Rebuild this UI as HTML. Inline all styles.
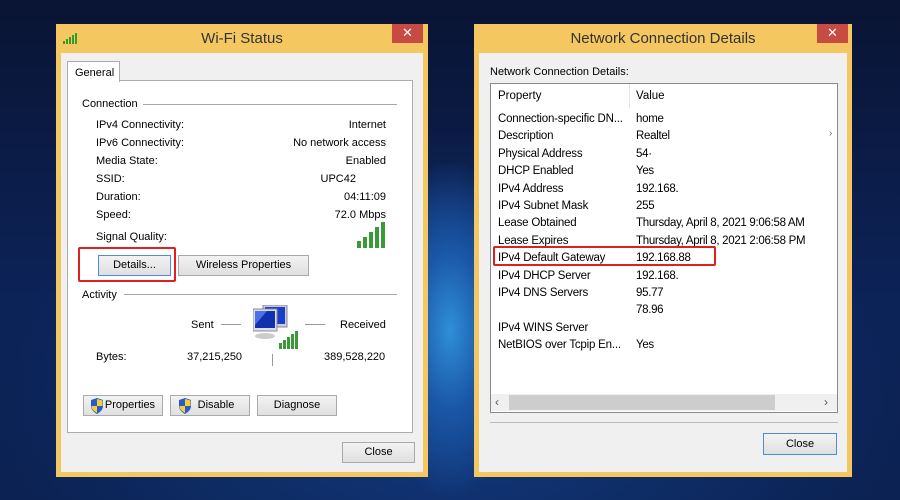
<!DOCTYPE html>
<html><head><meta charset="utf-8"><style>
*{margin:0;padding:0;box-sizing:border-box}
body{width:900px;height:500px;overflow:hidden;position:relative;font-family:"Liberation Sans",sans-serif;font-size:11px;color:#000;
background:radial-gradient(ellipse 90px 200px at 450px 330px,#2f8fd8 0%,#1a56a6 40%,transparent 85%),radial-gradient(ellipse 500px 300px at 450px 400px,#12397e 0%,transparent 90%),linear-gradient(180deg,#0a1434 0%,#0c2358 60%,#0b2252 100%);}
.a{position:absolute}
.win{position:absolute;background:#f4c760;}
.client{position:absolute;background:#f0f0f0}
.title{position:absolute;font-size:15px;color:#333;top:6px;width:100%;text-align:center}
.x{position:absolute;top:0;width:31px;height:19px;background:#c74a43;color:#fff;font-size:13px;text-align:center;line-height:18px}
.btn{position:absolute;background:linear-gradient(#f3f3f3,#e0e0e0);border:1px solid #aaa;text-align:center;font-size:11px;line-height:18px}
.r{position:absolute;right:0}
.line{position:absolute;height:1px;background:#a8a8a8}
</style></head><body>

<div class="win" style="left:56px;top:24px;width:372px;height:453px">
 <div class="title">Wi-Fi Status</div>
 <svg class="a" style="left:7px;top:9px" width="16" height="11"><g fill="#3a9a2a"><rect x="0" y="8" width="2" height="3"/><rect x="3" y="6" width="2" height="5"/><rect x="6" y="4" width="2" height="7"/><rect x="9" y="2" width="2" height="9"/><rect x="12" y="0" width="2" height="11"/></g></svg>
 <div class="x" style="left:336px">✕</div>
 <div class="client" style="left:5px;top:29px;width:362px;height:419px"></div>
</div>
<div class="a" style="left:67px;top:80px;width:346px;height:353px;background:#fff;border:1px solid #adadad"></div>
<div class="a" style="left:67px;top:61px;width:53px;height:21px;background:#fff;border:1px solid #adadad;border-bottom:none;padding:5px 0 0 7px;font-size:11px">General</div>

<div class="a" style="left:82px;top:98px">Connection</div><div class="line" style="left:143px;top:104px;width:254px"></div>
<div class="a" style="left:96px;top:116px;width:290px;line-height:18px">
 <div style="position:relative">IPv4 Connectivity:<span class="r">Internet</span></div>
 <div style="position:relative">IPv6 Connectivity:<span class="r">No network access</span></div>
 <div style="position:relative">Media State:<span class="r">Enabled</span></div>
 <div style="position:relative">SSID:<span class="r" style="right:30px">UPC42</span></div>
 <div style="position:relative">Duration:<span class="r">04:11:09</span></div>
 <div style="position:relative">Speed:<span class="r">72.0 Mbps</span></div>
</div>
<div class="a" style="left:96px;top:231px">Signal Quality:</div>
<svg class="a" style="left:357px;top:222px" width="30" height="26"><g fill="#3a9a3a"><rect x="0" y="19" width="4" height="7"/><rect x="6" y="15" width="4" height="11"/><rect x="12" y="10" width="4" height="16"/><rect x="18" y="5" width="4" height="21"/><rect x="24" y="0" width="4" height="26"/></g></svg>
<div class="btn" style="left:98px;top:255px;width:73px;height:21px;border-color:#4a90d0">Details...</div>
<div class="btn" style="left:178px;top:255px;width:131px;height:21px">Wireless Properties</div>
<div class="a" style="left:78px;top:247px;width:98px;height:35px;border:2px solid #e02020;border-radius:2px"></div>

<div class="a" style="left:82px;top:289px">Activity</div><div class="line" style="left:124px;top:294px;width:273px"></div>
<div class="a" style="left:191px;top:319px">Sent</div><div class="line" style="left:221px;top:324px;width:20px;background:#999"></div>
<div class="line" style="left:305px;top:324px;width:20px;background:#999"></div>
<div class="a" style="left:340px;top:319px">Received</div>
<svg class="a" style="left:253px;top:305px" width="48" height="44">
 <rect x="10" y="0" width="24" height="22" fill="#ccd" stroke="#889"/><rect x="12" y="2" width="20" height="17" fill="#1a40c8"/>
 <rect x="0" y="4" width="24" height="22" fill="#dde" stroke="#889"/><rect x="2" y="6" width="20" height="17" fill="#1030b0"/>
 <polygon points="2,6 14,6 2,20" fill="#4a70e8"/><ellipse cx="12" cy="31" rx="10" ry="3" fill="#ccc"/>
 <g fill="#3a9a3a"><rect x="26" y="38" width="3" height="6"/><rect x="30" y="35" width="3" height="9"/><rect x="34" y="32" width="3" height="12"/><rect x="38" y="29" width="3" height="15"/><rect x="42" y="26" width="3" height="18"/></g>
</svg>
<div class="a" style="left:96px;top:351px">Bytes:</div>
<div class="a" style="left:187px;top:351px">37,215,250</div>
<div class="a" style="left:272px;top:354px;width:1px;height:12px;background:#999"></div>
<div class="a" style="left:324px;top:351px">389,528,220</div>
<div class="btn" style="left:83px;top:395px;width:80px;height:21px;padding-left:14px">Properties</div>
<div class="btn" style="left:170px;top:395px;width:80px;height:21px;padding-left:12px">Disable</div>
<div class="btn" style="left:257px;top:395px;width:80px;height:21px">Diagnose</div>
<svg class="a" style="left:90px;top:398px" width="14" height="16"><path d="M7 0L13 2V8C13 12 10 14 7 16C4 14 1 12 1 8V2Z" fill="#2a5ad0"/><path d="M7 1V8H12.5V2.5Z M7 8V15C4 13 1.5 11.5 1.5 8Z" fill="#f4d030"/></svg>
<svg class="a" style="left:178px;top:398px" width="14" height="16"><path d="M7 0L13 2V8C13 12 10 14 7 16C4 14 1 12 1 8V2Z" fill="#2a5ad0"/><path d="M7 1V8H12.5V2.5Z M7 8V15C4 13 1.5 11.5 1.5 8Z" fill="#f4d030"/></svg>
<div class="btn" style="left:342px;top:442px;width:73px;height:21px">Close</div>

<div class="win" style="left:474px;top:24px;width:378px;height:453px">
 <div class="title">Network Connection Details</div>
 <div class="x" style="left:343px">✕</div>
 <div class="client" style="left:5px;top:29px;width:368px;height:419px"></div>
</div>
<div class="a" style="left:490px;top:66px;font-size:11px">Network Connection Details:</div>
<div class="a" style="left:490px;top:83px;width:348px;height:330px;background:#fff;border:1px solid #8a8a8a"></div>
<div class="a" style="left:629px;top:84px;width:1px;height:24px;background:#e4e4e4"></div>
<div class="a" style="left:498px;top:90px;font-size:11.5px">Property</div>
<div class="a" style="left:636px;top:90px;font-size:11.5px">Value</div>
<div class="a" style="left:498px;top:111px;font-size:11.5px;line-height:17.4px;white-space:nowrap;letter-spacing:-0.2px">
Connection-specific DN...<br>Description<br>Physical Address<br>DHCP Enabled<br>IPv4 Address<br>IPv4 Subnet Mask<br>Lease Obtained<br>Lease Expires<br>IPv4 Default Gateway<br>IPv4 DHCP Server<br>IPv4 DNS Servers<br><br>IPv4 WINS Server<br>NetBIOS over Tcpip En...</div>
<div class="a" style="left:636px;top:111px;font-size:11.5px;line-height:17.4px;white-space:nowrap;letter-spacing:-0.3px">
home<br>Realtel<br>54·<br>Yes<br>192.168.<br>255<br>Thursday, April 8, 2021 9:06:58 AM<br>Thursday, April 8, 2021 2:06:58 PM<br>192.168.88<br>192.168.<br>95.77<br>78.96<br><br>Yes</div>
<div class="a" style="left:829px;top:128px;font-size:10px;color:#666">›</div>
<div class="a" style="left:493px;top:246px;width:223px;height:20px;border:2px solid #e02020;border-radius:2px"></div>
<div class="a" style="left:491px;top:394px;width:346px;height:17px;background:#f0f0f0"></div>
<div class="a" style="left:509px;top:395px;width:266px;height:15px;background:#cdcdcd"></div>
<div class="a" style="left:495px;top:395px;font-size:12px;color:#555">‹</div>
<div class="a" style="left:824px;top:395px;font-size:12px;color:#555">›</div>
<div class="line" style="left:490px;top:422px;width:348px;background:#bbb"></div>
<div class="btn" style="left:763px;top:433px;width:74px;height:22px;border-color:#4a90d0;line-height:20px">Close</div>
</body></html>
